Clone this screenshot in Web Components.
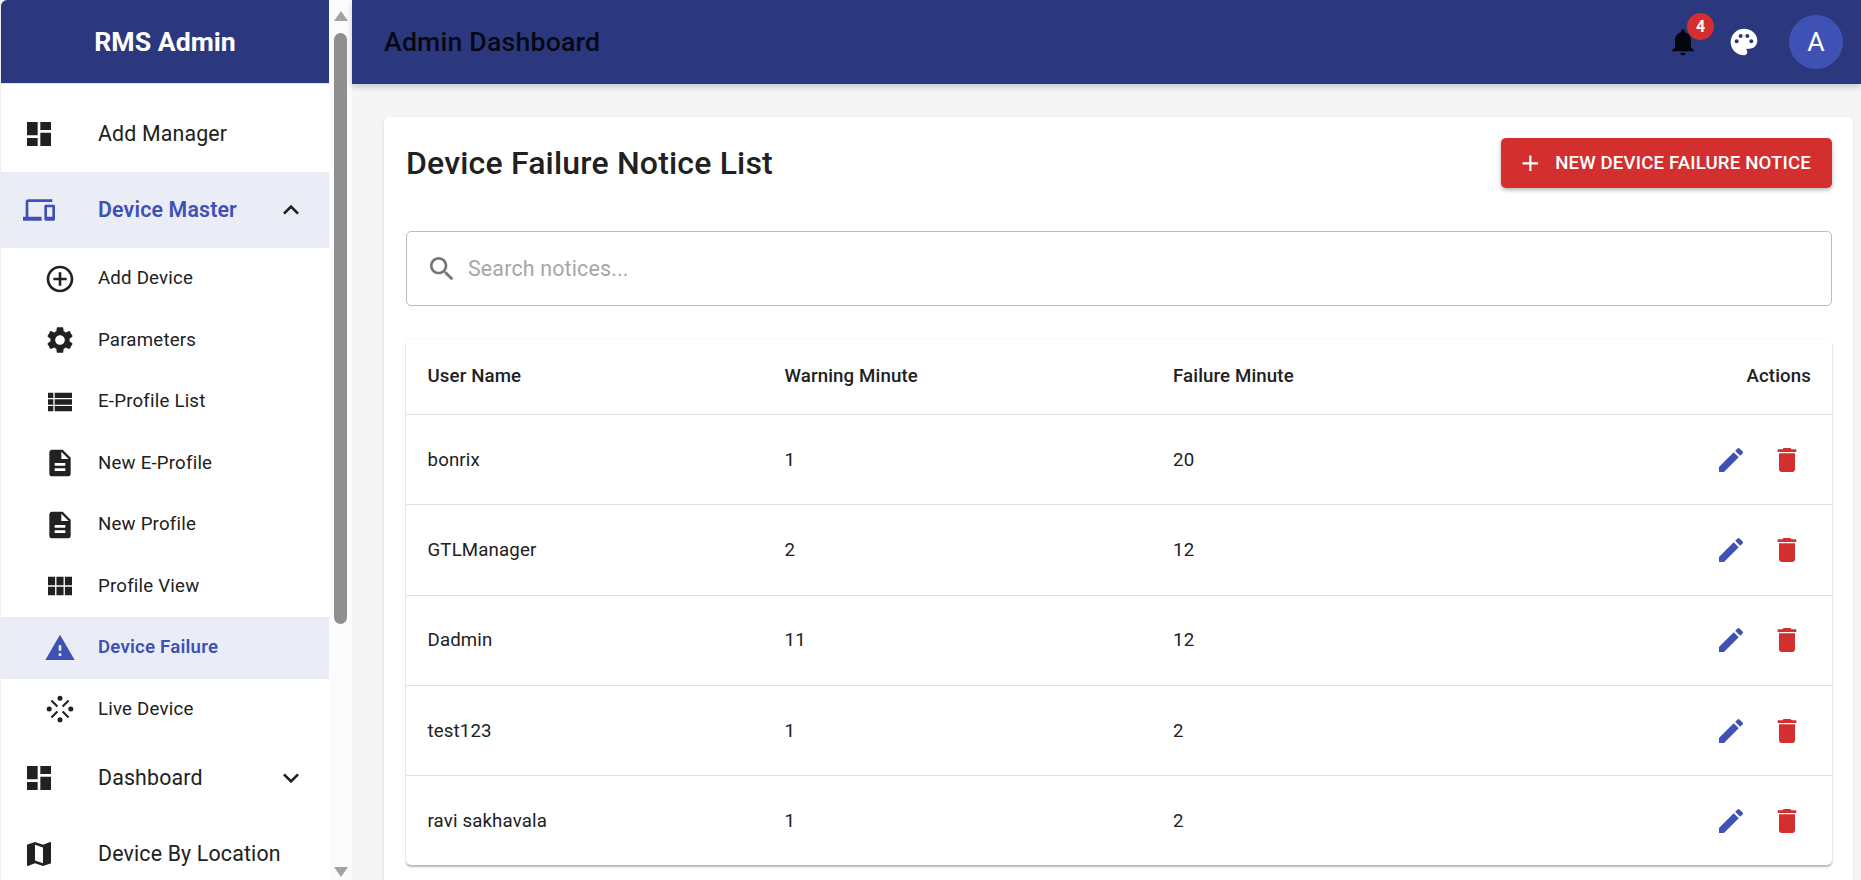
<!DOCTYPE html>
<html lang="en">
<head>
<meta charset="utf-8">
<title>RMS Admin</title>
<style>
  html, body { margin: 0; height: 100%; overflow: hidden; background: #f5f5f5; }
  body { font-family: Roboto, "Liberation Sans", sans-serif; color: #212121; }
</style>
</head>
<body>
<rms-app></rms-app>

<script>
const ICONS = {
  dashboard: 'M3 13h8V3H3v10zm0 8h8v-6H3v6zm10 0h8V11h-8v10zm0-18v6h8V3h-8z',
  devices: 'M4 6h18V4H4c-1.1 0-2 .9-2 2v11H0v3h14v-3H4V6zm19 2h-6c-.55 0-1 .45-1 1v10c0 .55.45 1 1 1h6c.55 0 1-.45 1-1V9c0-.55-.45-1-1-1zm-1 9h-4v-7h4v7z',
  less: 'M12 8l-6 6 1.41 1.41L12 10.83l4.59 4.58L18 14z',
  more: 'M16.59 8.59L12 13.17 7.41 8.59 6 10l6 6 6-6z',
  addCircle: 'M13 7h-2v4H7v2h4v4h2v-4h4v-2h-4V7zm-1-5C6.48 2 2 6.48 2 12s4.48 10 10 10 10-4.48 10-10S17.52 2 12 2zm0 18c-4.41 0-8-3.59-8-8s3.59-8 8-8 8 3.59 8 8-3.59 8-8 8z',
  settings: 'M19.14 12.94c.04-.3.06-.61.06-.94 0-.32-.02-.64-.07-.94l2.03-1.58c.18-.14.23-.41.12-.61l-1.92-3.32c-.12-.22-.37-.29-.59-.22l-2.39.96c-.5-.38-1.03-.7-1.62-.94l-.36-2.54c-.04-.24-.24-.41-.48-.41h-3.84c-.24 0-.43.17-.47.41l-.36 2.54c-.59.24-1.13.57-1.62.94l-2.39-.96c-.22-.08-.47 0-.59.22L2.74 8.87c-.12.21-.08.47.12.61l2.03 1.58c-.05.3-.09.63-.09.94s.02.64.07.94l-2.03 1.58c-.18.14-.23.41-.12.61l1.92 3.32c.12.22.37.29.59.22l2.39-.96c.5.38 1.03.7 1.62.94l.36 2.54c.05.24.24.41.48.41h3.84c.24 0 .44-.17.47-.41l.36-2.54c.59-.24 1.13-.56 1.62-.94l2.39.96c.22.08.47 0 .59-.22l1.92-3.32c.12-.22.07-.47-.12-.61l-2.01-1.58zM12 15.6c-1.98 0-3.6-1.62-3.6-3.6s1.62-3.6 3.6-3.6 3.6 1.62 3.6 3.6-1.62 3.6-3.6 3.6z',
  list: 'M3 14h4v-4H3v4zm0 5h4v-4H3v4zM3 9h4V5H3v4zm5 5h13v-4H8v4zm0 5h13v-4H8v4zM8 5v4h13V5H8z',
  doc: 'M14 2H6c-1.1 0-1.99.9-1.99 2L4 20c0 1.1.89 2 1.99 2H18c1.1 0 2-.9 2-2V8l-6-6zm2 16H8v-2h8v2zm0-4H8v-2h8v2zm-3-5V3.5L18.5 9H13z',
  module: 'M14.67 5v6.5H9.33V5h5.34zm1 6.5H21V5h-5.33v6.5zm-1 7.5v-6.5H9.33V19h5.34zm1-6.5V19H21v-6.5h-5.33zm-7.34 0H3V19h5.33v-6.5zm0-1V5H3v6.5h5.33z',
  warning: 'M1 21h22L12 2 1 21zm12-3h-2v-2h2v2zm0-4h-2v-4h2v4z',
  map: 'M20.5 3l-.16.03L15 5.1 9 3 3.36 4.9c-.21.07-.36.25-.36.48V20.5c0 .28.22.5.5.5l.16-.03L9 18.9l6 2.1 5.64-1.9c.21-.07.36-.25.36-.48V3.5c0-.28-.22-.5-.5-.5zM15 19l-6-2.11V5l6 2.11V19z',
  bell: 'M12 22c1.1 0 2-.9 2-2h-4c0 1.1.89 2 2 2zm6-6v-5c0-3.07-1.64-5.64-4.5-6.32V4c0-.83-.67-1.5-1.5-1.5s-1.5.67-1.5 1.5v.68C7.63 5.36 6 7.92 6 11v5l-2 2v1h16v-1l-2-2z',
  palette: 'M12 2C6.49 2 2 6.49 2 12s4.49 10 10 10c1.38 0 2.5-1.12 2.5-2.5 0-.61-.23-1.2-.64-1.67-.08-.1-.13-.21-.13-.33 0-.28.22-.5.5-.5H16c3.31 0 6-2.69 6-6 0-4.96-4.49-9-10-9zm5.5 11c-.83 0-1.5-.67-1.5-1.5s.67-1.5 1.5-1.5 1.5.67 1.5 1.5-.67 1.5-1.5 1.5zm-3-4c-.83 0-1.5-.67-1.5-1.5S13.67 6 14.5 6s1.5.67 1.5 1.5S15.33 9 14.5 9zM5 11.5c0-.83.67-1.5 1.5-1.5s1.5.67 1.5 1.5S7.33 13 6.5 13 5 12.33 5 11.5zm6-4c0 .83-.67 1.5-1.5 1.5S8 8.33 8 7.5 8.67 6 9.5 6s1.5.67 1.5 1.5z',
  edit: 'M3 17.25V21h3.75L17.81 9.94l-3.75-3.75L3 17.25zM20.71 7.04c.39-.39.39-1.02 0-1.41l-2.34-2.34a.9959.9959 0 0 0-1.41 0l-1.83 1.83 3.75 3.75 1.83-1.83z',
  trash: 'M6 19c0 1.1.9 2 2 2h8c1.1 0 2-.9 2-2V7H6v12zM19 4h-3.5l-1-1h-5l-1 1H5v2h14V4z',
  add: 'M19 13h-6v6h-2v-6H5v-2h6V5h2v6h6v2z',
  search: 'M15.5 14h-.79l-.28-.27C15.41 12.59 16 11.11 16 9.5 16 5.91 13.09 3 9.5 3S3 5.91 3 9.5 5.91 16 9.5 16c1.61 0 3.09-.59 4.23-1.57l.27.28v.79l5 4.99L20.49 19l-4.99-5zm-6 0C7.01 14 5 11.99 5 9.5S7.01 5 9.5 5 14 7.01 14 9.5 11.99 14 9.5 14z',
  live: 'M12 2a1.9 1.9 0 1 1 0 3.8A1.9 1.9 0 0 1 12 2zm0 16.2a1.9 1.9 0 1 1 0 3.8 1.9 1.9 0 0 1 0-3.8zM3.9 10.1a1.9 1.9 0 1 1 0 3.8 1.9 1.9 0 0 1 0-3.8zm16.2 0a1.9 1.9 0 1 1 0 3.8 1.9 1.9 0 0 1 0-3.8zM5 6.1 6.1 5l4.5 4.5-1.1 1.1zM19 6.1 17.9 5l-4.5 4.5 1.1 1.1zM5 17.9 6.1 19l4.5-4.5-1.1-1.1zM19 17.9 17.9 19l-4.5-4.5 1.1-1.1z'
};

class RmsIcon extends HTMLElement {
  connectedCallback() {
    const size = this.getAttribute('size') || 32;
    this.attachShadow({ mode: 'open' });
    this.shadowRoot.innerHTML = `
      <style>
        :host { display: inline-flex; flex: none; width: ${size}px; height: ${size}px; }
        svg { width: 100%; height: 100%; fill: currentColor; display: block; }
      </style>
      <svg viewBox="0 0 24 24"><path d="${ICONS[this.getAttribute('name')]}"/></svg>
    `;
  }
}
customElements.define('rms-icon', RmsIcon);

class NavItem extends HTMLElement {
  connectedCallback() {
    const chevron = this.getAttribute('chevron');
    this.attachShadow({ mode: 'open' });
    this.shadowRoot.innerHTML = `
      <style>
        :host { display: flex; align-items: center; height: 76px; padding-left: 22px; box-sizing: border-box; font-size: 21.33px; letter-spacing: .17px; color: #212121; }
        :host([sub]) { height: 61.5px; padding-left: 43px; font-size: 18.67px; letter-spacing: .2px; }
        :host([active]) { background: #ebedf6; color: #3f51b5; font-weight: 600; }
        .icon { display: flex; width: 76px; flex: none; }
        :host([sub]) .icon { width: 55px; }
        .text { flex: 1; white-space: nowrap; margin-left: -1px; padding-bottom: 1px; }
        .chev { color: #212121; margin-right: 22px; }
      </style>
      <span class="icon"><rms-icon name="${this.getAttribute('icon')}"></rms-icon></span>
      <span class="text"><slot></slot></span>
      ${chevron ? `<rms-icon class="chev" name="${chevron}"></rms-icon>` : ''}
    `;
  }
}
customElements.define('nav-item', NavItem);

class FakeScrollbar extends HTMLElement {
  constructor() {
    super();
    this.attachShadow({ mode: 'open' });
    this.shadowRoot.innerHTML = `
      <style>
        :host { display: flex; flex-direction: column; align-items: center; flex: none; width: 23px; height: 880px; background: #fbfbfb; box-sizing: border-box; padding-top: 11px; }
        .up, .down { width: 0; height: 0; border-left: 7.5px solid transparent; border-right: 7.5px solid transparent; }
        .up { border-bottom: 10px solid #a3a3a3; }
        .down { border-top: 10px solid #a3a3a3; margin-top: 243px; }
        .thumb { width: 13px; height: 591px; margin-top: 12px; background: #8f8f8f; border-radius: 6.5px; }
      </style>
      <div class="up"></div>
      <div class="thumb"></div>
      <div class="down"></div>
    `;
  }
}
customElements.define('fake-scrollbar', FakeScrollbar);

class RmsSidebar extends HTMLElement {
  constructor() {
    super();
    this.attachShadow({ mode: 'open' });
    this.shadowRoot.innerHTML = `
      <style>
        :host { display: flex; flex: none; width: 352px; height: 880px; overflow: hidden; background: #ececec; padding-left: 1px; box-sizing: border-box; }
        .panel { width: 328px; flex: none; background: #fff; overflow: hidden; }
        header { height: 84px; background: #2c387e; color: #fff; font-size: 26.67px; font-weight: 700; display: flex; align-items: center; justify-content: center; border-top-left-radius: 6px; box-sizing: border-box; border-bottom: 1px solid #e4e4e4; }
        nav { padding-top: 12px; }
      </style>
      <div class="panel">
        <header>RMS Admin</header>
        <nav><slot></slot></nav>
      </div>
      <fake-scrollbar></fake-scrollbar>
    `;
  }
}
customElements.define('rms-sidebar', RmsSidebar);

class RmsTopbar extends HTMLElement {
  constructor() {
    super();
    this.attachShadow({ mode: 'open' });
    this.shadowRoot.innerHTML = `
      <style>
        :host { display: flex; align-items: center; flex: none; height: 84px; background: #2c387e; padding: 0 18px 0 33px; box-sizing: border-box; box-shadow: 0 3px 6px rgba(0,0,0,.18); position: relative; z-index: 2; }
        h1 { flex: 1; margin: 0 0 0 -1px; font-size: 26.67px; font-weight: 500; letter-spacing: .2px; color: rgba(0,0,0,.87); }
        .bell { position: relative; display: flex; color: #05050f; margin-right: 29px; }
        .badge { position: absolute; top: -13px; left: 20px; width: 27px; height: 27px; border-radius: 50%; background: #d32f2f; color: #fff; font-size: 16px; font-weight: 700; display: flex; align-items: center; justify-content: center; }
        .palette { color: #fff; margin-right: 29px; }
        .avatar { width: 54px; height: 54px; border-radius: 50%; background: #3f51b5; color: #fff; font-size: 26.67px; display: flex; align-items: center; justify-content: center; }
      </style>
      <h1>Admin Dashboard</h1>
      <span class="bell"><rms-icon name="bell"></rms-icon><span class="badge">4</span></span>
      <rms-icon class="palette" name="palette"></rms-icon>
      <span class="avatar">A</span>
    `;
  }
}
customElements.define('rms-topbar', RmsTopbar);

class NoticeRow extends HTMLElement {
  connectedCallback() {
    const name = this.getAttribute('name');
    this.attachShadow({ mode: 'open' });
    this.shadowRoot.innerHTML = `
      <style>
        :host { display: grid; grid-template-columns: 357px 388.5px 1fr auto; align-items: center; height: 90.3px; padding: 0 17px 0 21.5px; box-sizing: border-box; font-size: 18.67px; letter-spacing: .15px; color: #212121; border-top: 1px solid #e0e0e0; }
        .actions { display: flex; }
        .btn { width: 56px; height: 56px; display: flex; align-items: center; justify-content: center; }
        .edit { color: #3f51b5; }
        .del { color: #d32f2f; }
      </style>
      <span>${name}</span>
      <span>${this.getAttribute('warning')}</span>
      <span>${this.getAttribute('failure')}</span>
      <span class="actions">
        <span class="btn edit"><rms-icon name="edit"></rms-icon></span>
        <span class="btn del"><rms-icon name="trash"></rms-icon></span>
      </span>
    `;
  }
}
customElements.define('notice-row', NoticeRow);

class NoticeTable extends HTMLElement {
  constructor() {
    super();
    this.attachShadow({ mode: 'open' });
    this.shadowRoot.innerHTML = `
      <style>
        :host { display: block; border-radius: 5px; background: #fff; box-shadow: 0 2px 2px rgba(0,0,0,.28), 0 0 2px rgba(0,0,0,.08); }
        .head { display: grid; grid-template-columns: 357px 388.5px 1fr auto; align-items: center; height: 75px; padding: 0 21px 1px 21.5px; box-sizing: border-box; font-size: 18.67px; font-weight: 500; letter-spacing: .13px; color: #212121; }
      </style>
      <div class="head">
        <span>User Name</span><span>Warning Minute</span><span>Failure Minute</span><span>Actions</span>
      </div>
      <slot></slot>
    `;
  }
}
customElements.define('notice-table', NoticeTable);

class NoticePage extends HTMLElement {
  constructor() {
    super();
    this.attachShadow({ mode: 'open' });
    this.shadowRoot.innerHTML = `
      <style>
        :host { display: block; margin: 33px 8px 0 32px; padding: 0 21px 40px 22px; background: #fff; border-radius: 5px 5px 0 0; box-shadow: 0 1px 3px rgba(0,0,0,.12); }
        .top { display: flex; align-items: center; justify-content: space-between; padding-top: 21px; }
        h2 { margin: 0; font-size: 32px; font-weight: 500; letter-spacing: .18px; color: #212121; }
        .new { display: flex; align-items: center; height: 50px; width: 331px; padding-left: 16px; box-sizing: border-box; background: #d32f2f; color: #fff; border-radius: 5px; font-size: 18.67px; font-weight: 500; letter-spacing: .14px; text-transform: uppercase; white-space: nowrap; box-shadow: 0 2px 4px rgba(0,0,0,.3); }
        .new rms-icon { margin-right: 11.5px; }
        .search { display: flex; align-items: center; height: 75px; margin: 43px 0 33px; padding-left: 19px; box-sizing: border-box; border: 1px solid #bdbdbd; border-radius: 5px; font-size: 21.33px; letter-spacing: .2px; color: #a6a6a6; }
        .search rms-icon { color: #757575; margin-right: 10px; }
      </style>
      <div class="top">
        <h2>Device Failure Notice List</h2>
        <span class="new"><rms-icon name="add" size="26.67"></rms-icon>New Device Failure Notice</span>
      </div>
      <div class="search"><rms-icon name="search"></rms-icon>Search notices...</div>
      <slot></slot>
    `;
  }
}
customElements.define('notice-page', NoticePage);

class RmsApp extends HTMLElement {
  constructor() {
    super();
    this.attachShadow({ mode: 'open' });
    this.shadowRoot.innerHTML = `
      <style>
        :host { display: flex; height: 880px; overflow: hidden; }
        main { flex: 1; min-width: 0; display: flex; flex-direction: column; }
      </style>
      <rms-sidebar>
        <nav-item icon="dashboard">Add Manager</nav-item>
        <nav-item icon="devices" chevron="less" active>Device Master</nav-item>
        <nav-item sub icon="addCircle">Add Device</nav-item>
        <nav-item sub icon="settings">Parameters</nav-item>
        <nav-item sub icon="list">E-Profile List</nav-item>
        <nav-item sub icon="doc">New E-Profile</nav-item>
        <nav-item sub icon="doc">New Profile</nav-item>
        <nav-item sub icon="module">Profile View</nav-item>
        <nav-item sub icon="warning" active>Device Failure</nav-item>
        <nav-item sub icon="live">Live Device</nav-item>
        <nav-item icon="dashboard" chevron="more">Dashboard</nav-item>
        <nav-item icon="map">Device By Location</nav-item>
      </rms-sidebar>
      <main>
        <rms-topbar></rms-topbar>
        <notice-page>
          <notice-table>
            <notice-row name="bonrix" warning="1" failure="20"></notice-row>
            <notice-row name="GTLManager" warning="2" failure="12"></notice-row>
            <notice-row name="Dadmin" warning="11" failure="12"></notice-row>
            <notice-row name="test123" warning="1" failure="2"></notice-row>
            <notice-row name="ravi sakhavala" warning="1" failure="2"></notice-row>
          </notice-table>
        </notice-page>
      </main>
    `;
  }
}
customElements.define('rms-app', RmsApp);
</script>
</body>
</html>
